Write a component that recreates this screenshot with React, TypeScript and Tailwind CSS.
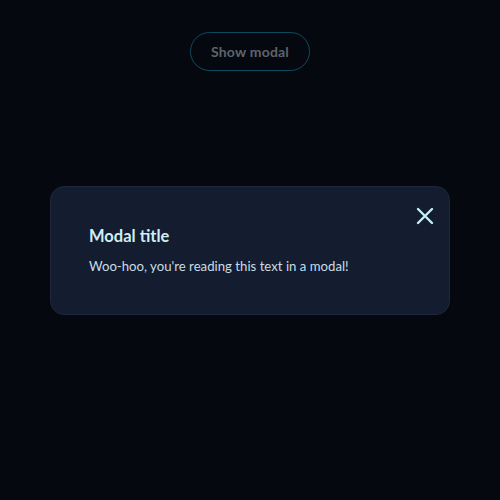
import React from "react";

export default function App() {
  return (
    <div
      className="w-[500px] h-[500px] bg-[#05080f] flex flex-col items-center overflow-hidden"
      style={{ fontFamily: "Lato, 'Noto Sans', sans-serif" }}
    >
      <button className="mt-[32px] w-[120px] h-[39px] rounded-full border-[1.5px] border-[#0e4a5e] text-[#5e636b] text-[14px] font-bold tracking-[0.2px]">
        Show modal
      </button>
      <div className="relative mt-[115px] w-[400px] h-[129px] rounded-[14px] bg-[#141c2f] border border-[#1e283a] pl-[38px] pt-[38px]">
        <button className="absolute right-[14px] top-[19px] w-[20px] h-[20px] flex items-center justify-center text-[#c3f0f6]">
          <svg width="18" height="18" viewBox="0 0 18 18" fill="none" stroke="currentColor" strokeWidth="2.4" strokeLinecap="round">
            <path d="M2 2L16 16M16 2L2 16" />
          </svg>
        </button>
        <h2 className="text-[16.5px] font-bold text-[#cdeef6] leading-[22px]">Modal title</h2>
        <p className="mt-[10px] text-[13.2px] text-[#c7dde7] leading-[18px]">
          Woo-hoo, you're reading this text in a modal!
        </p>
      </div>
    </div>
  );
}
